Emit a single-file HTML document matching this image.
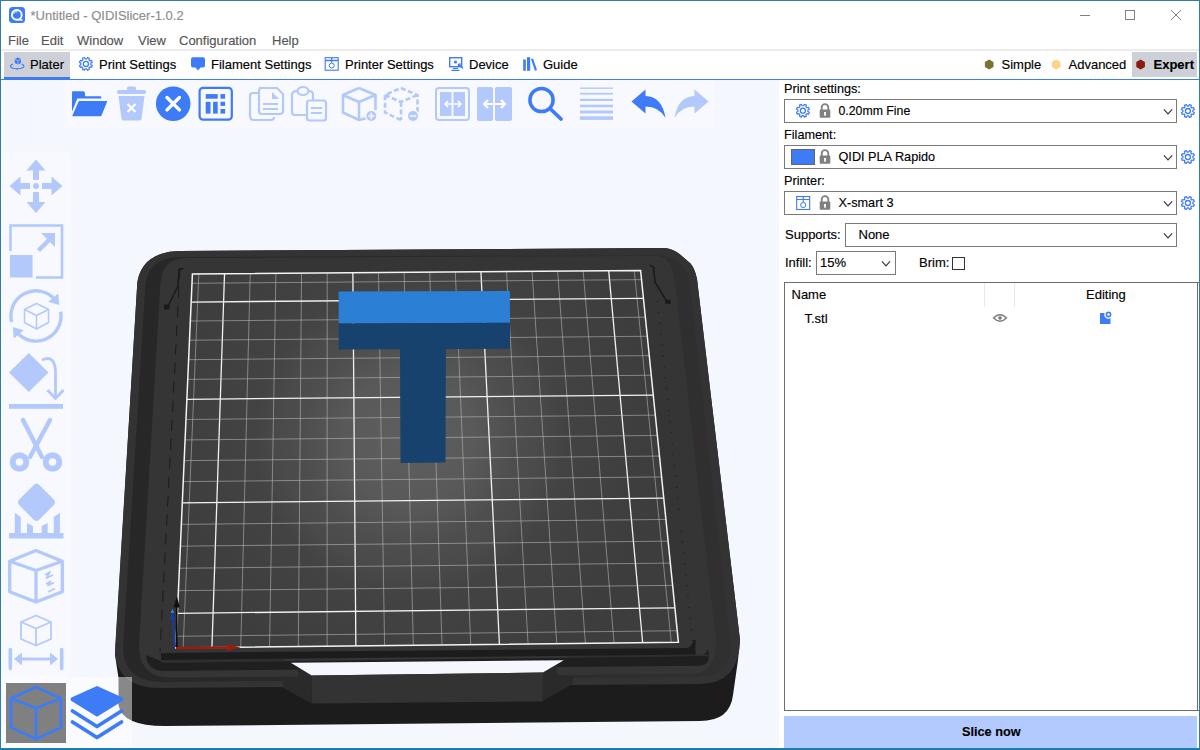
<!DOCTYPE html>
<html><head><meta charset="utf-8">
<style>
*{box-sizing:border-box}
html,body{margin:0;padding:0}
body{width:1200px;height:750px;overflow:hidden;position:relative;background:#fff;font-family:"Liberation Sans",sans-serif;font-size:13px;color:#000}
.a{position:absolute}
.t{position:absolute;white-space:nowrap;line-height:16px;-webkit-text-stroke:0.15px currentColor}
.menu{color:#555}
.combo{position:absolute;border:1px solid #7a7a7a;background:#fff}
.chev{position:absolute;width:7px;height:7px;border-right:1.3px solid #333;border-bottom:1.3px solid #333;transform:rotate(45deg)}
</style></head><body>
<!-- title -->
<svg class="a" style="left:9px;top:7px" width="16" height="16" viewBox="0 0 16 16"><rect x="0" y="0" width="16" height="16" rx="3.5" fill="#3d7bf7"/><circle cx="7.8" cy="7.9" r="4.9" fill="none" stroke="#fff" stroke-width="1.9"/><ellipse cx="8.6" cy="7.6" rx="1.6" ry="2.8" fill="#3d7bf7" transform="rotate(-20 8.6 7.6)"/><path d="M4.5,7 Q6,3.8 8.5,5" stroke="#fff" stroke-width="0.8" fill="none"/><path d="M8,12.5 L13.5,13" stroke="#fff" stroke-width="1.3"/></svg>
<div class="t" style="left:30.5px;top:7.6px;color:#8e8e8e">*Untitled - QIDISlicer-1.0.2</div>
<div class="a" style="left:1080px;top:15px;width:10px;height:1px;background:#808080"></div>
<div class="a" style="left:1125px;top:10px;width:10px;height:10px;border:1px solid #808080"></div>
<svg class="a" style="left:1170px;top:9px" width="12" height="12" viewBox="0 0 12 12"><path d="M1 1L11 11M11 1L1 11" stroke="#808080" stroke-width="1"/></svg>
<!-- menu -->
<div class="t menu" style="left:8px;top:32.8px">File</div>
<div class="t menu" style="left:41px;top:32.8px">Edit</div>
<div class="t menu" style="left:77px;top:32.8px">Window</div>
<div class="t menu" style="left:138px;top:32.8px">View</div>
<div class="t menu" style="left:179px;top:32.8px">Configuration</div>
<div class="t menu" style="left:272px;top:32.8px">Help</div>
<div class="a" style="left:1px;top:49px;width:1198px;height:2px;background:#ececec"></div>
<!-- tabs -->
<div class="a" style="left:4px;top:52px;width:66px;height:25px;background:#cdd0d6"></div>
<div class="a" style="left:4px;top:77px;width:66px;height:2px;background:#3d7cf1"></div>
<div class="a" style="left:1px;top:79px;width:1198px;height:1px;background:#3d7cf1"></div>
<div class="t" style="left:30px;top:57px">Plater</div>
<div class="t" style="left:99px;top:57px">Print Settings</div>
<div class="t" style="left:211px;top:57px">Filament Settings</div>
<div class="t" style="left:345px;top:57px">Printer Settings</div>
<div class="t" style="left:469px;top:57px">Device</div>
<div class="t" style="left:543px;top:57px">Guide</div>
<div class="a" style="left:1132px;top:52px;width:65px;height:25px;background:#cdd0d6"></div>
<div class="t" style="left:1001.5px;top:57px">Simple</div>
<div class="t" style="left:1068.5px;top:57px">Advanced</div>
<div class="t" style="left:1153.5px;top:57px;font-weight:bold">Expert</div>
<svg class="a" style="left:0;top:0" width="1200" height="80" viewBox="0 0 1200 80">
<!-- plater icon -->
<path d="M17.9,57.6 L21,59.1 L21,62.9 L17.9,64.6 L14.8,62.9 L14.8,59.1 Z" fill="#3d7bf7"/>
<path d="M14.8,59.1 L17.9,60.8 L21,59.1 M17.9,60.8 L17.9,64.6" stroke="#cdd0d6" stroke-width="0.6" fill="none"/>
<path d="M13,64 Q10,65 10.6,66.8 Q12,68.8 17.2,68.8 Q22.4,68.8 23.8,66.8 Q24.4,65 21.6,64" fill="none" stroke="#3d7bf7" stroke-width="1.1"/>
<path d="M17.2,68 L17.2,69.8" stroke="#3d7bf7" stroke-width="1.1"/>
<!-- print settings gear -->
<g transform="translate(85.9,63.9)"><path d="M1.52,-6.42 L3.46,-5.62 L2.97,-4.02 L4.02,-2.97 L5.62,-3.46 L6.42,-1.52 L4.94,-0.75 L4.94,0.75 L6.42,1.52 L5.62,3.46 L4.02,2.97 L2.97,4.02 L3.46,5.62 L1.52,6.42 L0.75,4.94 L-0.75,4.94 L-1.52,6.42 L-3.46,5.62 L-2.97,4.02 L-4.02,2.97 L-5.62,3.46 L-6.42,1.52 L-4.94,0.75 L-4.94,-0.75 L-6.42,-1.52 L-5.62,-3.46 L-4.02,-2.97 L-2.97,-4.02 L-3.46,-5.62 L-1.52,-6.42 L-0.75,-4.94 L0.75,-4.94 Z" fill="none" stroke="#3d7bf7" stroke-width="1.2" stroke-linejoin="round"/><circle r="2.5" fill="none" stroke="#3d7bf7" stroke-width="1.3"/></g>
<!-- filament -->
<path d="M193,57.2 L203,57.2 Q205,57.2 205,59.2 L205,65.5 Q205,67.5 203,67.5 L200.5,67.5 L198,70.5 L195.5,67.5 L193,67.5 Q191,67.5 191,65.5 L191,59.2 Q191,57.2 193,57.2 Z" fill="#3d7bf7"/>
<!-- printer -->
<rect x="325.2" y="57.7" width="13" height="12.5" fill="none" stroke="#3d7bf7" stroke-width="1.1"/>
<path d="M325.2,60.5 L338.2,60.5 M331.7,57.7 L331.7,62.5" stroke="#3d7bf7" stroke-width="1.3"/>
<circle cx="331.7" cy="65.5" r="2.5" fill="none" stroke="#3d7bf7" stroke-width="1"/>
<!-- device -->
<rect x="449.7" y="57.7" width="12" height="9" fill="none" stroke="#3d7bf7" stroke-width="1.4"/>
<circle cx="455.5" cy="62" r="1.6" fill="#3d7bf7"/>
<path d="M453,68.5 L458,68.5 M451.5,70.3 L459.5,70.3" stroke="#3d7bf7" stroke-width="1.2"/>
<path d="M458.5,64 L463,68.5 M458.5,64 L458.5,67 M458.5,64 L461.5,64" stroke="#3d7bf7" stroke-width="1.2"/>
<!-- guide -->
<rect x="523.2" y="59.5" width="2.6" height="11.3" fill="#3d7bf7"/>
<rect x="527" y="57.2" width="3.2" height="13.6" fill="#3d7bf7"/>
<path d="M531,59 L533,58.5 L537,70 L535,70.8 Z" fill="#3d7bf7"/>
<!-- hexagons -->
<path d="M989.2,59.5 L993.5,62 L993.5,67 L989.2,69.5 L984.9,67 L984.9,62 Z" fill="#7a7432"/>
<path d="M1056.2,59.5 L1060.5,62 L1060.5,67 L1056.2,69.5 L1051.9,67 L1051.9,62 Z" fill="#fdd38a"/>
<path d="M1140.6,59.5 L1144.9,62 L1144.9,67 L1140.6,69.5 L1136.3,67 L1136.3,62 Z" fill="#8b1a10"/>
</svg>
<div class="a" style="left:1px;top:80px;width:778px;height:669px;background:#f4f7fe"></div>
<div class="a" style="left:65px;top:80px;width:649.5px;height:48px;background:#f7f9fe;border-radius:0 0 5px 5px"></div>
<div class="a" style="left:1px;top:152px;width:69.5px;height:525px;background:#f7f9fe;border-radius:0 5px 5px 0"></div>
<svg class="a" style="left:0;top:0" width="1200" height="750" viewBox="0 0 1200 750">
<defs>
<radialGradient id="gg" cx="410" cy="440" r="250" gradientUnits="userSpaceOnUse">
<stop offset="0" stop-color="#5f5f5f"/><stop offset="0.26" stop-color="#595959"/><stop offset="0.42" stop-color="#4e4e4e"/><stop offset="0.52" stop-color="#4a4a4a"/><stop offset="0.62" stop-color="#434343"/><stop offset="1" stop-color="#3d3d3d"/></radialGradient>
<linearGradient id="chg" x1="115" y1="0" x2="740" y2="0" gradientUnits="userSpaceOnUse"><stop offset="0" stop-color="#272727"/><stop offset="0.5" stop-color="#2a2a2a"/><stop offset="1" stop-color="#303030"/></linearGradient>
</defs>
<path d="M180,251 L665,248 Q673,249 679.5,254 L690.5,263.5 Q695,269 697,279 L740,640 L738,660 L733,695 Q730,721 700,721 L165,726 Q122,726 118.5,705 L118.5,678 L115,655 L137.3,283 C139.5,266 151,251.5 180,251 Z" fill="#1c1c1c"/>
<path d="M180,251 L665,248 Q673,249 679.5,254 L690.5,263.5 Q695,269 697,279 L740,640 Q739,684 700,684 L160,688 Q116,688 115,650 L137.3,283 C139.5,266 151,251.5 180,251 Z" fill="#333333"/>
<path d="M182,257 L658,255 Q686,256 690,285 L731,645 Q731,677 698,677 L162,682 Q124,682 123,648 L145,290 C146,268 156,257 182,257 Z" fill="url(#chg)"/>
<path d="M184,258 L657,256 Q672,257 675,282 L716,640 Q717,674 690,674 L170,677.6 Q139,677.6 139,645 L160,290 Q160,259 184,258 Z" fill="#353535"/>
<path d="M165,662.7 L699,656 Q706,655.5 707,650 L708.5,650 L708.5,659 Q708,665.7 698,665.7 L165,671 Q147,671 146,655 Z" fill="#1f1f1f"/>
<path d="M161,660 L284,659 L284,661.5 L161,662.7 Z" fill="#2e2e2e"/>
<path d="M572,655.5 L708,654.5 L708,656 L572,657 Z" fill="#2e2e2e"/>
<path d="M161,653 L686,648 Q692.5,647.5 693.5,640 L695.5,640 L695.5,654.5 L161,660 Z" fill="#1c1c1c"/>
<polygon points="175.90,647.90 678.40,642.30 640.60,270.40 192.40,274.00" fill="url(#gg)"/>
<line x1="183.11" y1="647.82" x2="198.83" y2="273.95" stroke="#c4c2bc" stroke-opacity="0.6" stroke-width="0.9"/>
<line x1="211.93" y1="647.50" x2="224.53" y2="273.74" stroke="#f2f2f2" stroke-width="1.3"/>
<line x1="240.74" y1="647.18" x2="250.21" y2="273.54" stroke="#c4c2bc" stroke-opacity="0.6" stroke-width="0.9"/>
<line x1="269.54" y1="646.86" x2="275.89" y2="273.33" stroke="#c4c2bc" stroke-opacity="0.6" stroke-width="0.9"/>
<line x1="298.32" y1="646.54" x2="301.56" y2="273.12" stroke="#c4c2bc" stroke-opacity="0.6" stroke-width="0.9"/>
<line x1="327.09" y1="646.22" x2="327.21" y2="272.92" stroke="#c4c2bc" stroke-opacity="0.6" stroke-width="0.9"/>
<line x1="355.85" y1="645.89" x2="352.86" y2="272.71" stroke="#f2f2f2" stroke-width="1.3"/>
<line x1="384.59" y1="645.57" x2="378.49" y2="272.51" stroke="#c4c2bc" stroke-opacity="0.6" stroke-width="0.9"/>
<line x1="413.32" y1="645.25" x2="404.11" y2="272.30" stroke="#c4c2bc" stroke-opacity="0.6" stroke-width="0.9"/>
<line x1="442.03" y1="644.93" x2="429.72" y2="272.09" stroke="#c4c2bc" stroke-opacity="0.6" stroke-width="0.9"/>
<line x1="470.73" y1="644.61" x2="455.32" y2="271.89" stroke="#c4c2bc" stroke-opacity="0.6" stroke-width="0.9"/>
<line x1="499.42" y1="644.29" x2="480.91" y2="271.68" stroke="#f2f2f2" stroke-width="1.3"/>
<line x1="528.09" y1="643.98" x2="506.49" y2="271.48" stroke="#c4c2bc" stroke-opacity="0.6" stroke-width="0.9"/>
<line x1="556.75" y1="643.66" x2="532.06" y2="271.27" stroke="#c4c2bc" stroke-opacity="0.6" stroke-width="0.9"/>
<line x1="585.40" y1="643.34" x2="557.62" y2="271.07" stroke="#c4c2bc" stroke-opacity="0.6" stroke-width="0.9"/>
<line x1="614.03" y1="643.02" x2="583.16" y2="270.86" stroke="#c4c2bc" stroke-opacity="0.6" stroke-width="0.9"/>
<line x1="642.65" y1="642.70" x2="608.70" y2="270.66" stroke="#f2f2f2" stroke-width="1.3"/>
<line x1="671.25" y1="642.38" x2="634.22" y2="270.45" stroke="#c4c2bc" stroke-opacity="0.6" stroke-width="0.9"/>
<line x1="176.41" y1="636.29" x2="677.23" y2="630.76" stroke="#c4c2bc" stroke-opacity="0.6" stroke-width="0.9"/>
<line x1="177.43" y1="613.31" x2="674.90" y2="607.91" stroke="#f2f2f2" stroke-width="1.3"/>
<line x1="178.43" y1="590.63" x2="672.61" y2="585.35" stroke="#c4c2bc" stroke-opacity="0.6" stroke-width="0.9"/>
<line x1="179.42" y1="568.25" x2="670.35" y2="563.10" stroke="#c4c2bc" stroke-opacity="0.6" stroke-width="0.9"/>
<line x1="180.39" y1="546.16" x2="668.12" y2="541.14" stroke="#c4c2bc" stroke-opacity="0.6" stroke-width="0.9"/>
<line x1="181.35" y1="524.36" x2="665.91" y2="519.46" stroke="#c4c2bc" stroke-opacity="0.6" stroke-width="0.9"/>
<line x1="182.30" y1="502.84" x2="663.74" y2="498.06" stroke="#f2f2f2" stroke-width="1.3"/>
<line x1="183.24" y1="481.60" x2="661.59" y2="476.93" stroke="#c4c2bc" stroke-opacity="0.6" stroke-width="0.9"/>
<line x1="184.16" y1="460.63" x2="659.47" y2="456.07" stroke="#c4c2bc" stroke-opacity="0.6" stroke-width="0.9"/>
<line x1="185.08" y1="439.92" x2="657.38" y2="435.48" stroke="#c4c2bc" stroke-opacity="0.6" stroke-width="0.9"/>
<line x1="185.98" y1="419.48" x2="655.31" y2="415.14" stroke="#c4c2bc" stroke-opacity="0.6" stroke-width="0.9"/>
<line x1="186.87" y1="399.29" x2="653.27" y2="395.06" stroke="#f2f2f2" stroke-width="1.3"/>
<line x1="187.75" y1="379.36" x2="651.25" y2="375.23" stroke="#c4c2bc" stroke-opacity="0.6" stroke-width="0.9"/>
<line x1="188.62" y1="359.67" x2="649.26" y2="355.64" stroke="#c4c2bc" stroke-opacity="0.6" stroke-width="0.9"/>
<line x1="189.48" y1="340.22" x2="647.30" y2="336.29" stroke="#c4c2bc" stroke-opacity="0.6" stroke-width="0.9"/>
<line x1="190.33" y1="321.01" x2="645.35" y2="317.18" stroke="#c4c2bc" stroke-opacity="0.6" stroke-width="0.9"/>
<line x1="191.16" y1="302.04" x2="643.44" y2="298.30" stroke="#f2f2f2" stroke-width="1.3"/>
<line x1="191.99" y1="283.29" x2="641.54" y2="279.64" stroke="#c4c2bc" stroke-opacity="0.6" stroke-width="0.9"/>
<polygon points="175.90,647.90 678.40,642.30 640.60,270.40 192.40,274.00" fill="none" stroke="#f4f4f4" stroke-width="1.5"/>
<polygon points="338.7,291.5 509.9,291 510,322.8 338.7,323.5" fill="#2b7fd4"/>
<polygon points="338.7,323.5 510,322.8 510,348.7 338.7,349.5" fill="#18426e"/>
<polygon points="400,349 445.9,349 445.5,462.5 400.5,463" fill="#18426e"/>
<polygon points="301.8,669.4 311.8,675.4 311.8,703.6 283,688 283,677.2 298,677.2 298,669.4" fill="#2a2a2a"/>
<polygon points="542.8,672.6 557,664 557,674.4 572.8,677.4 572.8,684 542.8,700.8" fill="#2a2a2a"/>
<polygon points="290.8,662.8 563.8,660.3 542.8,672.6 311.8,675.4" fill="#f4f7fe"/>
<line x1="563.8" y1="660.3" x2="571.6" y2="656.4" stroke="#222" stroke-width="1"/>
<polygon points="311.8,675.4 542.8,672.6 542.8,701.4 311.8,703.6" fill="#333333"/>
<line x1="176" y1="648" x2="230" y2="647.5" stroke="#9a1c0e" stroke-width="2.4"/>
<polygon points="227,644 240.5,647.5 227,651" fill="#9a1c0e"/>
<line x1="176.8" y1="647" x2="176.8" y2="605" stroke="#0e0e0e" stroke-width="1.6"/>
<polygon points="173.8,607.5 176.8,596 179.8,607.5" fill="#0e0e0e"/>
<line x1="175" y1="647" x2="172.5" y2="616" stroke="#1c3a9a" stroke-width="2.2"/>
<polygon points="169,619.5 172.3,611 175.8,619.5" fill="#1c3a9a"/>
<polygon points="170.8,613 172.4,608.5 174,613" fill="#2a8fd8"/>
<line x1="180" y1="268" x2="160" y2="652" stroke="#1a1a1a" stroke-width="1" stroke-dasharray="11,8"/>
<line x1="654" y1="268" x2="693" y2="645" stroke="#1a1a1a" stroke-width="1.2" stroke-dasharray="1,10"/>
<path d="M183.5,268.5 L179,269.5 L178,286 L168.5,305" stroke="#1a1a1a" stroke-width="1.5" fill="none"/><rect x="164" y="304.5" width="5.5" height="5" fill="#1a1a1a"/>
<path d="M650,265 L653.5,267.5 L655,282 L666.5,301" stroke="#1a1a1a" stroke-width="1.5" fill="none"/><rect x="665.3" y="299.8" width="5.4" height="4" fill="#1a1a1a"/>
</svg><!-- top toolbar icons -->
<svg class="a" style="left:66px;top:80px" width="648" height="48" viewBox="66 80 648 48">
<g fill="#3d7bf7">
<path d="M72,92.3 Q72,91.3 73,91.3 L83.5,91.3 Q85,91.5 85,93.5 L85,96.3 L100.5,96.3 Q101.3,96.3 101.3,97.3 L101.3,98.6 L77.3,98.6 L72,111.7 Z"/>
<path d="M79.5,101 L106.5,101 Q107.5,101 107,102 L101.5,115.5 Q101,116.3 100,116.3 L73,116.3 Q72,116.3 72.5,115.3 L78.5,101.8 Q78.8,101 79.5,101 Z"/>
</g>
<g fill="#b3c8fb">
<rect x="127" y="86.5" width="9" height="4" rx="1.5"/>
<rect x="117" y="90" width="29" height="4" rx="1.5"/>
<path d="M118.5,96 L144.5,96 L141.5,119 Q141,120.5 139.5,120.5 L123.5,120.5 Q122,120.5 121.5,119 Z"/>
</g>
<path d="M127.5,104 L135.5,112 M135.5,104 L127.5,112" stroke="#fff" stroke-width="2.2"/>
<circle cx="173.2" cy="103.7" r="17.3" fill="#3d7bf7"/>
<path d="M167,97.5 L179.4,109.9 M179.4,97.5 L167,109.9" stroke="#fff" stroke-width="3.4" stroke-linecap="round"/>
<rect x="199.6" y="87.8" width="32.2" height="31.9" rx="3.5" fill="none" stroke="#3d7bf7" stroke-width="2.2"/>
<g fill="#3d7bf7"><rect x="205.7" y="94.1" width="12" height="4.6"/><rect x="205.7" y="101.8" width="4.8" height="11.8"/><rect x="213.1" y="101.8" width="4.6" height="11.8"/><rect x="220.5" y="94.1" width="4.6" height="4.6"/><rect x="220.5" y="101.8" width="4.6" height="4.1"/><rect x="220.5" y="109" width="4.6" height="4.6"/></g>
<!-- copy -->
<g fill="none" stroke="#b3c8fb" stroke-width="2.2" stroke-linejoin="round">
<path d="M258,93 L253,93 Q250,93 250,96 L250,116 Q250,120 254,120 L271,120 Q274,120 274,117"/>
<path d="M259,88 L277,88 L283,94 L283,111 Q283,114 280,114 L262,114 Q259,114 259,111 L259,91 Q259,88 262,88"/>
</g>
<path d="M272,92 L279,99 L272,99 Z" fill="#b3c8fb"/>
<path d="M263,104 L278,104 M263,109 L278,109" stroke="#b3c8fb" stroke-width="2"/>
<!-- paste -->
<g fill="none" stroke="#b3c8fb" stroke-width="2.2" stroke-linejoin="round">
<path d="M297,91 Q292,91 292,95 L292,112 Q292,115 295,115 L306,115"/>
<path d="M309,91 Q313,91 313,95 L313,100"/>
<ellipse cx="303" cy="91" rx="5.5" ry="4"/>
<rect x="307" y="100.5" width="19" height="20" rx="2.5"/>
</g>
<path d="M311,108 L322,108 M311,113 L322,113" stroke="#b3c8fb" stroke-width="2"/>
<!-- add instance -->
<g fill="none" stroke="#b3c8fb" stroke-width="2.6" stroke-linejoin="round">
<path d="M359,88 L375.5,95 L375.5,110 M367,118 L359,120 L343,112.5 L343,95 L359,88 M343,95 L359,102 L375.5,95 M359,102 L359,120"/>
</g>
<circle cx="371.3" cy="116" r="6.5" fill="#f7f9fe"/>
<circle cx="371.3" cy="116" r="5" fill="#b3c8fb"/><path d="M371.3,112.8 L371.3,119.2 M368.1,116 L374.5,116" stroke="#f7f9fe" stroke-width="1.6"/>
<!-- remove instance (dashed) -->
<g fill="none" stroke="#b3c8fb" stroke-width="2.6" stroke-dasharray="5,2.5">
<path d="M401,88 L417.5,95 L417.5,112 M401,120 L385,112.5 L385,95 L401,88 M385,95 L401,102 L417.5,95 M401,102 L401,120"/>
</g>
<circle cx="413" cy="116" r="6.5" fill="#f7f9fe"/>
<circle cx="413" cy="116" r="5" fill="#b3c8fb"/><path d="M409.8,116 L416.2,116" stroke="#f7f9fe" stroke-width="1.6"/>
<!-- split objects -->
<rect x="436" y="88" width="33" height="32" rx="3" fill="none" stroke="#b3c8fb" stroke-width="2"/>
<rect x="440" y="92" width="11.5" height="24" fill="#b3c8fb"/><rect x="453.5" y="92" width="11.5" height="24" fill="#b3c8fb"/>
<path d="M445,104 L461,104 M448,101 L445,104 L448,107 M458,101 L461,104 L458,107" stroke="#fff" stroke-width="1.6" fill="none"/>
<!-- split parts -->
<rect x="477" y="87" width="16" height="34" rx="2" fill="#b3c8fb"/><rect x="495" y="87" width="17" height="34" rx="2" fill="#b3c8fb"/>
<path d="M484,104 L505,104 M488,100 L484,104 L488,108 M501,100 L505,104 L501,108" stroke="#fff" stroke-width="2.2" fill="none"/>
<!-- search -->
<circle cx="541.5" cy="100" r="11.6" fill="none" stroke="#3d7bf7" stroke-width="3.5"/>
<path d="M550,108.5 L561,119" stroke="#3d7bf7" stroke-width="3.8" stroke-linecap="round"/>
<!-- layers -->
<g fill="#b3c8fb"><rect x="580" y="87.5" width="33" height="1.4"/><rect x="580" y="92.8" width="33" height="1.8"/><rect x="580" y="98.8" width="33" height="2.2"/><rect x="580" y="104.7" width="33" height="2.6"/><rect x="580" y="110.5" width="33" height="3"/><rect x="580" y="116.3" width="33" height="3.6"/></g>
<!-- undo -->
<path d="M631.5,101.5 L645.5,89.5 L645.5,96 Q662,96.5 665.5,118 Q659,106.5 645.5,106.5 L645.5,113.5 Z" fill="#3d7bf7"/>
<path d="M708.5,101.5 L694.5,89.5 L694.5,96 Q678,96.5 674.5,118 Q681,106.5 694.5,106.5 L694.5,113.5 Z" fill="#b3c8fb"/>
</svg>
<!-- left toolbar icons -->
<svg class="a" style="left:0;top:150px" width="75" height="530" viewBox="0 150 75 530">
<path d="M11.7,322.0 A25,25 0 0 1 55.2,299.9" fill="none" stroke="#b3c8fb" stroke-width="3.4"/>
<path d="M60.6,311.7 A25,25 0 0 1 16.8,332.1" fill="none" stroke="#b3c8fb" stroke-width="3.4"/>
<path d="M59.3,304.9 L58.2,293.5 L48.2,301.8 Z M12.7,327.1 L13.8,338.5 L23.8,330.2 Z" fill="#b3c8fb"/>
<path d="M36.5,303.5 L48.5,309.5 L48.5,322.5 L36.5,329 L24.5,322.5 L24.5,309.5 Z M24.5,309.5 L36.5,315.5 L48.5,309.5 M36.5,315.5 L36.5,329" fill="none" stroke="#b3c8fb" stroke-width="1.5" stroke-linejoin="round"/>
<g fill="#b3c8fb">
<!-- move -->
<path d="M36,159.5 L45.5,170.5 L39,170.5 L39,180 L33,180 L33,170.5 L26.5,170.5 Z"/>
<path d="M36,213 L45.5,202 L39,202 L39,192 L33,192 L33,202 L26.5,202 Z"/>
<path d="M9.5,186 L20.5,176.5 L20.5,183 L30,183 L30,189 L20.5,189 L20.5,195.5 Z"/>
<path d="M62.5,186 L51.5,176.5 L51.5,183 L42,183 L42,189 L51.5,189 L51.5,195.5 Z"/>
<circle cx="36" cy="186" r="3"/>
<!-- scale -->
<rect x="10" y="255" width="22.5" height="22.5"/>
<path d="M41,233 L55,233 L55,247 Z"/>
</g>
<g fill="none" stroke="#b3c8fb">
<path d="M10.5,251 L10.5,225.5 L62,225.5 L62,277.5 L36,277.5" stroke-width="2.6"/>
<path d="M38.5,250.5 L51,238" stroke-width="4.5"/>
</g>
<g fill="#b3c8fb">
<!-- place on face -->
<path d="M28.8,353 L48.5,372.5 L28.8,392 L9,372.5 Z"/>
<rect x="9" y="404" width="54" height="4.8"/>
<path d="M46,397 L54,389 L58,389 L58,391 L52,398 Q55,400 52,402 Z" opacity="0"/>

</g>
<path d="M42,360 Q55,354 55.5,372 L55.5,398" fill="none" stroke="#b3c8fb" stroke-width="2.8"/><path d="M47.5,390 L55.5,398.5 L63.5,390" fill="none" stroke="#b3c8fb" stroke-width="2.8"/>
<!-- cut -->
<g fill="none" stroke="#b3c8fb">
<path d="M23,420 L42,457" stroke-width="4.5" stroke-linecap="round"/>
<path d="M50,420 L30,457" stroke-width="4.5" stroke-linecap="round"/>
<circle cx="19.5" cy="462" r="6.8" stroke-width="6"/>
<circle cx="52.5" cy="462" r="6.8" stroke-width="6"/>
</g>
<!-- support paint -->
<g fill="#b3c8fb">
<path d="M36.5,483.5 Q37.8,483.5 39,484.7 L54.3,500 Q55.6,502.3 54.3,504.6 L39,519.9 Q36.5,522 34,519.9 L18.7,504.6 Q17.4,502.3 18.7,500 L34,484.7 Q35.2,483.5 36.5,483.5 Z"/>
<rect x="9" y="533" width="54.5" height="5.5"/>
<path d="M14.8,512.7 L20.8,517 L20.8,533 L14.8,533 Z"/>
<path d="M59.9,512.7 L53.8,517 L53.8,533 L59.9,533 Z"/>
<path d="M27,523 L30,524.5 L33,526 L33,533 L27,533 Z"/>
<path d="M47.7,523 L41.7,526 L41.7,533 L47.7,533 Z"/>
</g>

<!-- fuzzy cube -->
<g fill="none" stroke="#b3c8fb" stroke-linejoin="round">
<path d="M36,550.5 L62.3,561.3 L62.3,591.7 L36,602 L9.7,591.7 L9.7,561.3 Z M9.7,561.3 L36,570.5 L62.3,561.3 M36,570.5 L36,602" stroke-width="3.3"/>
<path d="M45,575 L50,572 L46.5,578 L53,575 M46,584 L50.5,581.5 L48,585.5 L54,582.5 M48,592 L55,588.5" stroke-width="1.8"/>
<!-- measure -->
<path d="M36,615.5 L51,622 L51,639 L36,645.5 L21,639 L21,622 Z M21,622 L36,628.5 L51,622 M36,628.5 L36,645.5" stroke-width="1.8"/>
<path d="M10.3,649.5 L10.3,668.5 M61.7,649.5 L61.7,668.5" stroke-width="3.6" stroke-linecap="round"/>
<path d="M18,659 L54,659" stroke-width="3"/>
</g>
<g fill="#b3c8fb"><path d="M14,659 L22,652.5 L22,665.5 Z"/><path d="M58,659 L50,652.5 L50,665.5 Z"/></g>
</svg>
<!-- bottom view toolbar -->
<div class="a" style="left:1px;top:677px;width:131px;height:72px;background:rgba(255,255,255,0.48)"></div>
<div class="a" style="left:6px;top:683px;width:60px;height:60px;background:#808080"></div>
<svg class="a" style="left:0;top:677px" width="132" height="72" viewBox="0 677 132 72">
<path d="M36,687 L61,698.5 L61,727.5 L36,739 L11,727.5 L11,698.5 Z M11,698.5 L36,708 L61,698.5 M36,708 L36,739" fill="none" stroke="#3d7bf7" stroke-width="2.8" stroke-linejoin="round"/>
<path d="M97,686 L122.5,697.5 Q124.5,699.3 122.5,701 L97,716.7 L71.5,701 Q69.5,699.3 71.5,697.5 Z" fill="#3d7bf7"/>
<path d="M72.5,711 L97,726.5 L121.5,711" fill="none" stroke="#3d7bf7" stroke-width="3.8" stroke-linecap="round" stroke-linejoin="round"/>
<path d="M72.5,722 L97,737.5 L121.5,722" fill="none" stroke="#3d7bf7" stroke-width="3.8" stroke-linecap="round" stroke-linejoin="round"/>
</svg>
<div class="t" style="left:784px;top:81px;font-size:12.7px">Print settings:</div>
<div class="combo" style="left:784px;top:99px;width:393px;height:24px"></div>
<div class="t" style="left:838.5px;top:103.2px;font-size:12.3px">0.20mm Fine</div>
<div class="t" style="left:784px;top:127.2px;font-size:12.7px">Filament:</div>
<div class="combo" style="left:784px;top:145px;width:393px;height:24px"></div>
<div class="a" style="left:791px;top:149px;width:24px;height:16px;background:#3d7bf7;border:1px solid #666"></div>
<div class="t" style="left:838.5px;top:149px;font-size:12.7px">QIDI PLA Rapido</div>
<div class="t" style="left:784px;top:172.8px;font-size:12.7px">Printer:</div>
<div class="combo" style="left:784px;top:191px;width:393px;height:24px"></div>
<div class="t" style="left:838.5px;top:195.3px;font-size:12.7px">X-smart 3</div>
<div class="t" style="left:785px;top:227.1px">Supports:</div>
<div class="combo" style="left:845px;top:223px;width:332px;height:24px"></div>
<div class="t" style="left:858.5px;top:227.1px">None</div>
<div class="t" style="left:785px;top:254.7px">Infill:</div>
<div class="combo" style="left:816px;top:251px;width:80px;height:24px"></div>
<div class="t" style="left:820px;top:254.7px">15%</div>
<div class="t" style="left:919px;top:254.7px">Brim:</div>
<div class="a" style="left:952px;top:257px;width:13px;height:13px;border:1px solid #333;background:#fff"></div>
<div class="a" style="left:784px;top:282px;width:415px;height:429px;border:1px solid #6e6e6e;border-right:none;background:#fff"></div>
<div class="a" style="left:1197px;top:282px;width:1px;height:429px;background:#6e6e6e"></div>
<div class="a" style="left:984px;top:283px;width:1px;height:24px;background:#e8e8e8"></div>
<div class="a" style="left:1014px;top:283px;width:1px;height:24px;background:#e8e8e8"></div>
<div class="t" style="left:791.5px;top:287.3px">Name</div>
<div class="t" style="left:1086px;top:287.3px">Editing</div>
<div class="t" style="left:804.5px;top:310.8px">T.stl</div>
<div class="a" style="left:784px;top:716px;width:413px;height:32px;background:#b3cafe"></div>
<div class="t" style="left:962px;top:723.5px;font-weight:bold;font-size:12.7px">Slice now</div>
<!-- chevrons -->
<svg class="a" style="left:0;top:0" width="1200" height="750" viewBox="0 0 1200 750">
<g fill="none" stroke="#3a3a3a" stroke-width="1.2">
<path d="M1163.9,109.4 L1168,113.8 L1172.2,109.4"/>
<path d="M1163.9,155.4 L1168,159.8 L1172.2,155.4"/>
<path d="M1163.9,201.4 L1168,205.8 L1172.2,201.4"/>
<path d="M1163.9,233.4 L1168,237.8 L1172.2,233.4"/>
<path d="M882,261.4 L886,265.8 L890,261.4"/>
</g>
<!-- gears -->
<defs>
<g id="gear"><path d="M1.52,-6.42 L3.46,-5.62 L2.97,-4.02 L4.02,-2.97 L5.62,-3.46 L6.42,-1.52 L4.94,-0.75 L4.94,0.75 L6.42,1.52 L5.62,3.46 L4.02,2.97 L2.97,4.02 L3.46,5.62 L1.52,6.42 L0.75,4.94 L-0.75,4.94 L-1.52,6.42 L-3.46,5.62 L-2.97,4.02 L-4.02,2.97 L-5.62,3.46 L-6.42,1.52 L-4.94,0.75 L-4.94,-0.75 L-6.42,-1.52 L-5.62,-3.46 L-4.02,-2.97 L-2.97,-4.02 L-3.46,-5.62 L-1.52,-6.42 L-0.75,-4.94 L0.75,-4.94 Z" fill="none" stroke="#3d7bf7" stroke-width="1.2" stroke-linejoin="round"/><circle r="2.5" fill="none" stroke="#3d7bf7" stroke-width="1.3"/></g>
<g id="lock"><path d="M-3.3,-1 L-3.3,-3.5 A3.3,3.3 0 0 1 3.3,-3.5 L3.3,-1" fill="none" stroke="#808080" stroke-width="1.8"/><rect x="-5.3" y="-1.5" width="10.6" height="8.2" rx="1" fill="#808080"/><path d="M-1,1 L1,1 L0.8,4.8 L-0.8,4.8 Z" fill="#fff"/></g>
</defs>
<use href="#gear" x="1187.9" y="111"/>
<use href="#gear" x="1187.9" y="157"/>
<use href="#gear" x="1187.9" y="203"/>
<use href="#gear" x="802.9" y="110.7"/>
<use href="#lock" x="825" y="111"/>
<use href="#lock" x="825" y="157"/>
<use href="#lock" x="825" y="203"/>
<!-- printer icon -->
<rect x="796.7" y="196.5" width="13" height="13" fill="none" stroke="#3d7bf7" stroke-width="1.1"/>
<path d="M796.7,199.5 L809.7,199.5 M803.2,196.5 L803.2,202" stroke="#3d7bf7" stroke-width="1.1"/>
<circle cx="803.2" cy="205" r="2.6" fill="none" stroke="#3d7bf7" stroke-width="1"/>
<!-- eye -->
<path d="M993.5,318 Q1000,311.5 1006.5,318 Q1000,324.5 993.5,318 Z" fill="none" stroke="#777" stroke-width="1.2"/>
<circle cx="1000" cy="318" r="1.8" fill="#777"/>
<!-- edit icon -->
<path d="M1100,313 L1106,313 L1110.5,317.5 L1110.5,324 L1100,324 Z" fill="#3d7bf7"/>
<circle cx="1108.5" cy="314.5" r="3.6" fill="#3d7bf7" stroke="#fff" stroke-width="1.4"/>
<circle cx="1108.5" cy="314.5" r="1.3" fill="#fff"/>
</svg>
<!-- window border -->
<div class="a" style="left:0;top:0;width:1200px;height:1px;background:#2e7ea6"></div>
<div class="a" style="left:0;top:0;width:1px;height:750px;background:#2e7ea6"></div>
<div class="a" style="left:1199px;top:0;width:1px;height:750px;background:#2e7ea6"></div>
<div class="a" style="left:0;top:748px;width:1200px;height:1px;background:#2e7ea6"></div><div class="a" style="left:0;top:749px;width:1200px;height:1px;background:#0c7ab8"></div>
</body></html>
